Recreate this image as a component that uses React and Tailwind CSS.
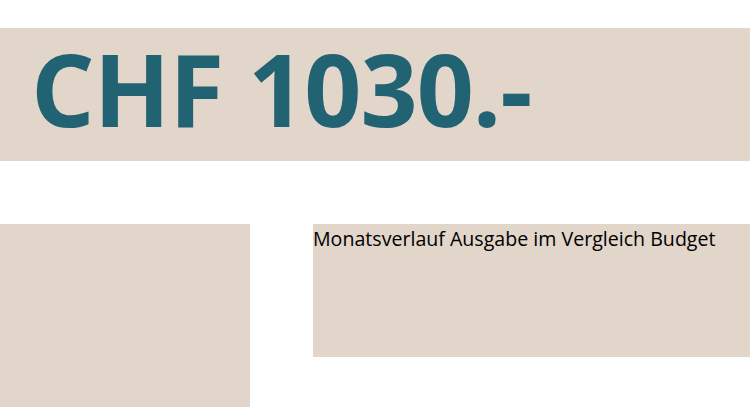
export default function App() {
  return (
    <div className="w-[750px] h-[407px] overflow-hidden bg-white" style={{ fontFamily: '"Open Sans", "Noto Sans", sans-serif' }}>
      <div className="pt-[28px]">
        <div className="h-[133px] bg-[#e2d5c9] flex items-center pl-[31px] pb-[14px]">
          <h1 className="text-[100px] leading-none font-bold text-[#226373] tracking-[-1px]">CHF 1030.-</h1>
        </div>
      </div>
      <div className="mt-[63px] flex gap-[63px] items-start">
        <div className="w-[250px] h-[190px] shrink-0 bg-[#e2d5c9]" />
        <div className="flex-1 h-[133px] bg-[#e2d5c9] text-[19.6px] leading-[30px] text-black">
          Monatsverlauf Ausgabe im Vergleich Budget
        </div>
      </div>
    </div>
  );
}
